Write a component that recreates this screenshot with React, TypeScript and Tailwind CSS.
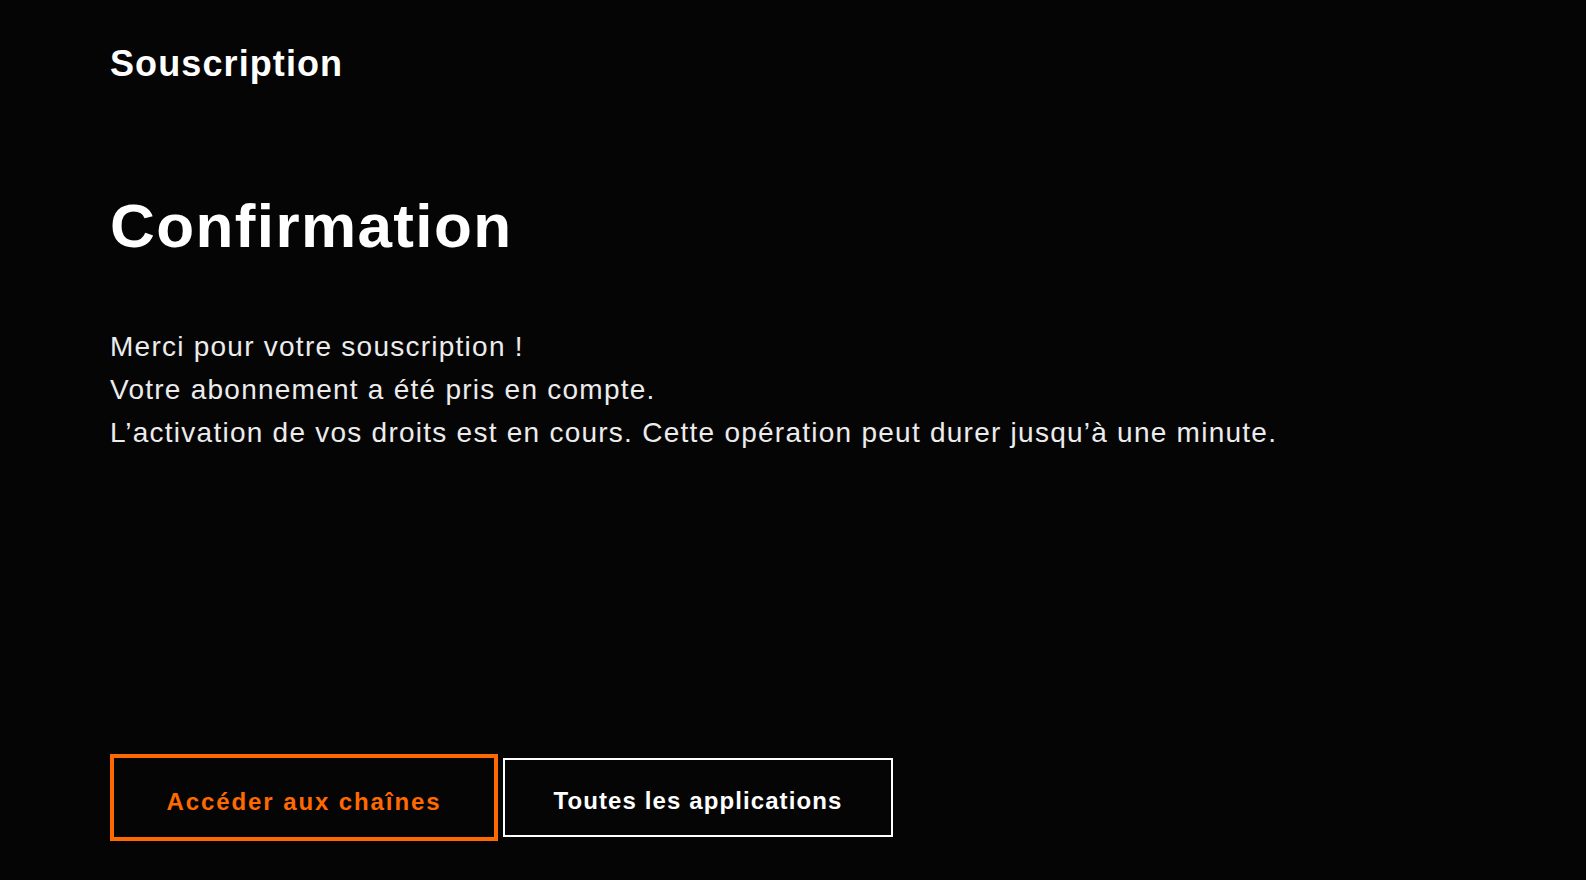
import React from "react";

export default function App() {
  return (
    <div
      className="w-[1586px] h-[880px] bg-[#050505] overflow-hidden flex flex-col pl-[110px]"
      style={{ fontFamily: '"Liberation Sans", Arial, sans-serif' }}
    >
      <div className="mt-[44px] text-[36px] leading-[40px] font-bold text-white tracking-[1.1px]">
        Souscription
      </div>
      <h1 className="mt-[107px] text-[62px] leading-[70px] font-bold text-white tracking-[1.4px]">
        Confirmation
      </h1>
      <div className="mt-[64px] text-[28px] leading-[43px] text-[#ececec] tracking-[1.25px]">
        <p>Merci pour votre souscription !</p>
        <p>Votre abonnement a été pris en compte.</p>
        <p>L’activation de vos droits est en cours. Cette opération peut durer jusqu’à une minute.</p>
      </div>
      <div className="mt-[300px] flex items-center gap-[5px]">
        <div className="w-[388px] h-[87px] border-[4px] border-[#ff6a00] flex items-center justify-center text-[24px] font-bold text-[#ff6a00] tracking-[1.9px] pt-[8px]">
          Accéder aux chaînes
        </div>
        <div className="w-[390px] h-[79px] border-[2px] border-white flex items-center justify-center text-[24px] font-bold text-white tracking-[1.1px] pt-[7px]">
          Toutes les applications
        </div>
      </div>
    </div>
  );
}
